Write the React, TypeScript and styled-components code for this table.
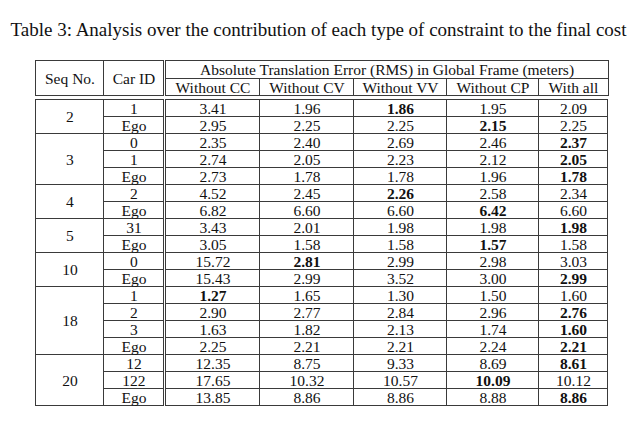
import React from "react";
import styled, { createGlobalStyle } from "styled-components";

const Global = createGlobalStyle`
  html, body { margin: 0; padding: 0; background: #fff; }
  body { font-family: "Liberation Serif", "Times New Roman", serif; color: #111; }
`;

const Page = styled.div`
  width: 630px;
  height: 431px;
  box-sizing: border-box;
  padding-top: 18px;
  display: flex;
  flex-direction: column;
  align-items: center;
`;

const Caption = styled.div`
  font-size: 19px;
  line-height: 23px;
  white-space: nowrap;
  margin-left: 7px;
`;

const Tables = styled.div`
  margin-top: 19px;
  margin-left: 14px;
  display: flex;
  flex-direction: column;
  gap: 3px;
`;

const Grid = styled.table`
  border-collapse: collapse;
  table-layout: fixed;
  width: 573px;
  font-size: 15.5px;
`;

const Cell = styled.td<{ $bold?: boolean; $double?: boolean; $h?: number }>`
  border: 1px solid #3a3a3a;
  ${(p) => (p.$double ? "border-right: 3px double #3a3a3a;" : "")}
  text-align: center;
  padding: 0;
  height: ${(p) => p.$h ?? 16}px;
  line-height: 15px;
  font-weight: ${(p) => (p.$bold ? 700 : 400)};
  white-space: nowrap;
  vertical-align: middle;
`;

const widths = [68, 61, 95, 94, 93, 92, 69];

const Cols = () => (
  <colgroup>
    {widths.map((w, i) => (
      <col key={i} style={{ width: w }} />
    ))}
  </colgroup>
);

type Row = [string, string[]];
const groups: { seq: string; rows: Row[] }[] = [
  { seq: "2", rows: [["1", ["3.41", "1.96", "*1.86", "1.95", "2.09"]], ["Ego", ["2.95", "2.25", "2.25", "*2.15", "2.25"]]] },
  {
    seq: "3",
    rows: [
      ["0", ["2.35", "2.40", "2.69", "2.46", "*2.37"]],
      ["1", ["2.74", "2.05", "2.23", "2.12", "*2.05"]],
      ["Ego", ["2.73", "1.78", "1.78", "1.96", "*1.78"]],
    ],
  },
  { seq: "4", rows: [["2", ["4.52", "2.45", "*2.26", "2.58", "2.34"]], ["Ego", ["6.82", "6.60", "6.60", "*6.42", "6.60"]]] },
  { seq: "5", rows: [["31", ["3.43", "2.01", "1.98", "1.98", "*1.98"]], ["Ego", ["3.05", "1.58", "1.58", "*1.57", "1.58"]]] },
  { seq: "10", rows: [["0", ["15.72", "*2.81", "2.99", "2.98", "3.03"]], ["Ego", ["15.43", "2.99", "3.52", "3.00", "*2.99"]]] },
  {
    seq: "18",
    rows: [
      ["1", ["*1.27", "1.65", "1.30", "1.50", "1.60"]],
      ["2", ["2.90", "2.77", "2.84", "2.96", "*2.76"]],
      ["3", ["1.63", "1.82", "2.13", "1.74", "*1.60"]],
      ["Ego", ["2.25", "2.21", "2.21", "2.24", "*2.21"]],
    ],
  },
  {
    seq: "20",
    rows: [
      ["12", ["12.35", "8.75", "9.33", "8.69", "*8.61"]],
      ["122", ["17.65", "10.32", "10.57", "*10.09", "10.12"]],
      ["Ego", ["13.85", "8.86", "8.86", "8.88", "*8.86"]],
    ],
  },
];

const heads = ["Without CC", "Without CV", "Without VV", "Without CP", "With all"];

export default function App() {
  return (
    <Page>
      <Global />
      <Caption>Table 3: Analysis over the contribution of each type of constraint to the final cost</Caption>
      <Tables>
        <Grid>
          <Cols />
          <tbody>
            <tr>
              <Cell rowSpan={2}>Seq No.</Cell>
              <Cell rowSpan={2} $double>
                Car ID
              </Cell>
              <Cell colSpan={5} $h={17}>
                Absolute Translation Error (RMS) in Global Frame (meters)
              </Cell>
            </tr>
            <tr>
              {heads.map((h) => (
                <Cell key={h}>{h}</Cell>
              ))}
            </tr>
          </tbody>
        </Grid>
        <Grid>
          <Cols />
          <tbody>
            {groups.map((g) =>
              g.rows.map(([car, vals], ri) => (
                <tr key={g.seq + car + ri}>
                  {ri === 0 && <Cell rowSpan={g.rows.length}>{g.seq}</Cell>}
                  <Cell $double>{car}</Cell>
                  {vals.map((v, vi) => (
                    <Cell key={vi} $bold={v.startsWith("*")}>
                      {v.replace("*", "")}
                    </Cell>
                  ))}
                </tr>
              ))
            )}
          </tbody>
        </Grid>
      </Tables>
    </Page>
  );
}
